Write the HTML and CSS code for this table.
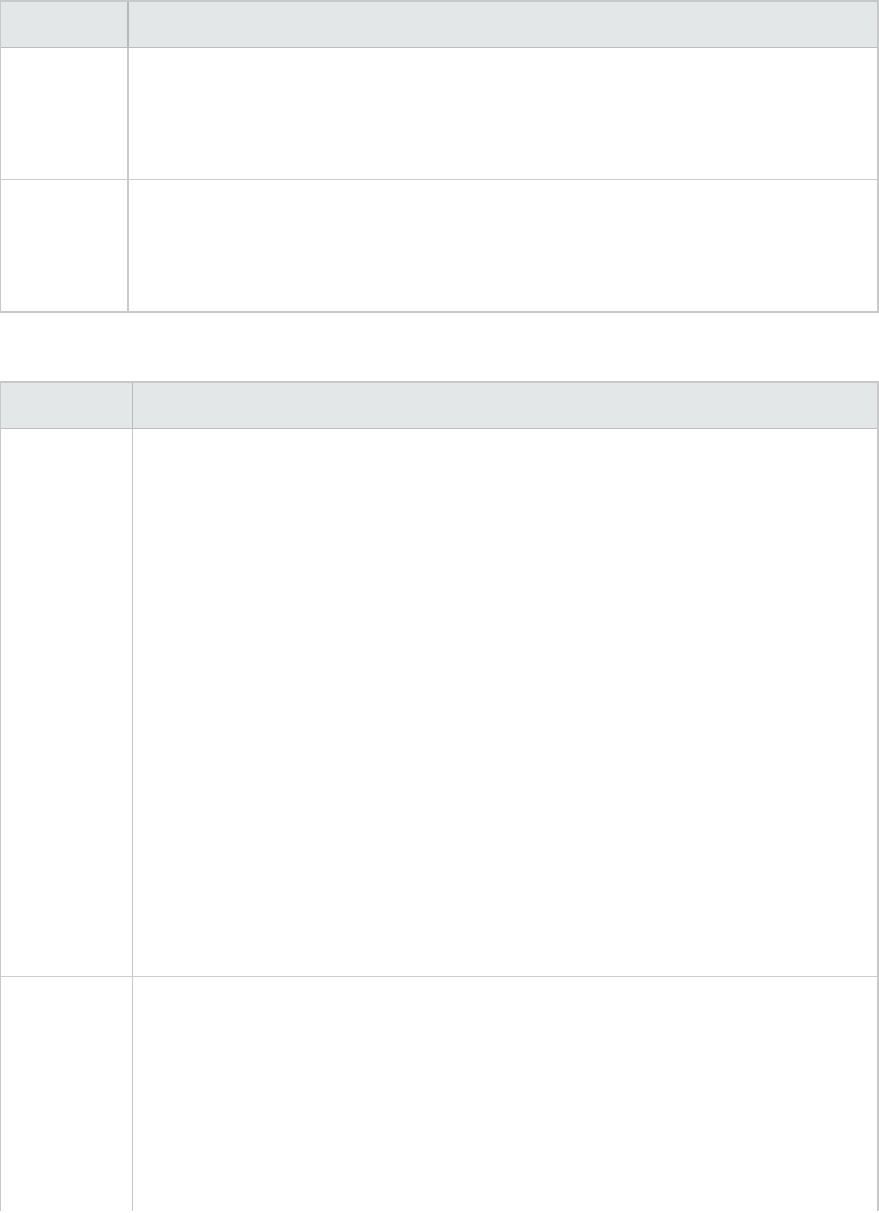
FILE: index.html
```html
<!DOCTYPE html>
<html>
<head>
<meta charset="utf-8">
<link rel="stylesheet" href="styles.css">
</head>
<body>
<div class="page">
  <table class="tbl tbl-a">
    <thead>
      <tr><th class="c1"></th><th class="c2"></th></tr>
    </thead>
    <tbody>
      <tr class="r-a"><td class="c1"></td><td class="c2"></td></tr>
      <tr class="r-a last"><td class="c1"></td><td class="c2"></td></tr>
    </tbody>
  </table>

  <table class="tbl tbl-b">
    <thead>
      <tr><th class="c1"></th><th class="c2"></th></tr>
    </thead>
    <tbody>
      <tr class="r-b1"><td class="c1"></td><td class="c2"></td></tr>
      <tr class="r-b2 last"><td class="c1"></td><td class="c2"></td></tr>
    </tbody>
  </table>
</div>
</body>
</html>
```

FILE: styles.css
```css
html, body {
  margin: 0;
  padding: 0;
  background: #ffffff;
  font-family: "Liberation Sans", Arial, sans-serif;
  font-size: 13px;
  color: #333333;
}

.page {
  width: 879px;
}

.tbl {
  width: 879px;
  border-collapse: separate;
  border-spacing: 0;
  table-layout: fixed;
  border-top: 2px solid #c8c8c8;
  border-left: 1px solid #c8c8c8;
  border-right: 2px solid #c8c8c8;
}

.tbl th,
.tbl td {
  padding: 0;
}

.tbl th {
  background: #e3e7e7;
  height: 45px;
  border-bottom: 1px solid #bdbdbd;
}

.tbl td {
  background: #ffffff;
  border-bottom: 1px solid #cccccc;
}

.tbl-a {
  border-bottom: 2px solid #c8c8c8;
}

.tbl-a .c1 {
  width: 126px;
  border-right: 2px solid #cacaca;
}

.tbl-a th.c1 {
  border-right-color: #b8b8b8;
}

.tbl-a .r-a td {
  height: 131px;
}

.tbl-a .last td {
  height: 131px;
  border-bottom: none;
}

.tbl-b {
  margin-top: 68px;
}

.tbl-b .c1 {
  width: 131px;
  border-right: 1px solid #c8c8c8;
}

.tbl-b th.c1 {
  border-right-color: #b8b8b8;
}

.tbl-b .r-b1 td {
  height: 547px;
}

.tbl-b .r-b2 td {
  height: 234px;
  border-bottom: none;
}
```
